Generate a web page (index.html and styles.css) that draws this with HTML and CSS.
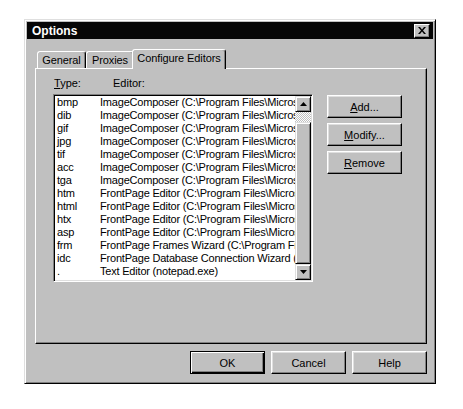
FILE: index.html
```html
<!DOCTYPE html>
<html lang="en">
<head>
    <meta charset="UTF-8">
    <meta name="viewport" content="width=device-width, initial-scale=1.0">
    <title>Options</title>
    <link rel="stylesheet" href="styles.css">
</head>
<body>
    <div class="dialog">
        <div class="titlebar">
            <span class="title">Options</span>
            <div class="close">
                <svg width="8" height="7" viewBox="0 0 8 7">
                    <path d="M0 0h2l2 2.5 2-2.5h2l-3 3.5 3 3.5h-2l-2-2.5-2 2.5h-2l3-3.5z" fill="#000"/>
                </svg>
            </div>
        </div>
        <div class="main">
            <div class="tabs">
                <div class="tab tab-general">General</div>
                <div class="tab tab-proxies">Proxies</div>
                <div class="tab active">Configure Editors</div>
            </div>
            <div class="panel">
                <div class="heads">
                    <span class="head-type"><u>T</u>ype:</span>
                    <span class="head-editor">Editor:</span>
                </div>
                <div class="row">
                    <div class="listbox">
                        <div class="items" id="items"></div>
                        <div class="scrollbar">
                            <div class="sb-btn">
                                <svg width="7" height="4" viewBox="0 0 7 4"><path d="M3.5 0L7 4H0z" fill="#000"/></svg>
                            </div>
                            <div class="sb-track"></div>
                            <div class="sb-thumb"></div>
                            <div class="sb-btn">
                                <svg width="7" height="4" viewBox="0 0 7 4"><path d="M0 0h7L3.5 4z" fill="#000"/></svg>
                            </div>
                        </div>
                    </div>
                    <div class="side">
                        <button class="btn"><u>A</u>dd...</button>
                        <button class="btn"><u>M</u>odify...</button>
                        <button class="btn"><u>R</u>emove</button>
                    </div>
                </div>
            </div>
            <div class="footer">
                <button class="btn default">OK</button>
                <button class="btn">Cancel</button>
                <button class="btn">Help</button>
            </div>
        </div>
    </div>
    <script>
        let editors = [
            ["bmp", "ImageComposer (C:\\Program Files\\Microsoft ImageComposer\\imgcmp.exe)"],
            ["dib", "ImageComposer (C:\\Program Files\\Microsoft ImageComposer\\imgcmp.exe)"],
            ["gif", "ImageComposer (C:\\Program Files\\Microsoft ImageComposer\\imgcmp.exe)"],
            ["jpg", "ImageComposer (C:\\Program Files\\Microsoft ImageComposer\\imgcmp.exe)"],
            ["tif", "ImageComposer (C:\\Program Files\\Microsoft ImageComposer\\imgcmp.exe)"],
            ["acc", "ImageComposer (C:\\Program Files\\Microsoft ImageComposer\\imgcmp.exe)"],
            ["tga", "ImageComposer (C:\\Program Files\\Microsoft ImageComposer\\imgcmp.exe)"],
            ["htm", "FrontPage Editor (C:\\Program Files\\Microsoft FrontPage\\bin\\fpeditor.exe)"],
            ["html", "FrontPage Editor (C:\\Program Files\\Microsoft FrontPage\\bin\\fpeditor.exe)"],
            ["htx", "FrontPage Editor (C:\\Program Files\\Microsoft FrontPage\\bin\\fpeditor.exe)"],
            ["asp", "FrontPage Editor (C:\\Program Files\\Microsoft FrontPage\\bin\\fpeditor.exe)"],
            ["frm", "FrontPage Frames Wizard (C:\\Program Files\\Microsoft FrontPage\\bin\\fpeditor.exe)"],
            ["idc", "FrontPage Database Connection Wizard (C:\\Program Files\\Microsoft FrontPage)"],
            [".", "Text Editor (notepad.exe)"]
        ];
        let str = "";
        for (let i = 0; i < editors.length; i++) {
            str += `
                <div class="item">
                    <span class="col-type">${editors[i][0]}</span>
                    <span class="col-editor">${editors[i][1]}</span>
                </div>
            `;
        }
        document.getElementById("items").innerHTML = str;
    </script>
</body>
</html>
```

FILE: styles.css
```css
body {
    margin: 0;
    background: #fff;
    font-family: 'Liberation Sans', Arial, sans-serif;
    font-size: 11px;
    color: #000;
}
.dialog {
    box-sizing: border-box;
    width: 412px;
    height: 365px;
    margin: 19px 0 0 24px;
    padding: 2px;
    background: #c0c0c0;
    border: 1px solid;
    border-color: #dfdfdf #000 #000 #dfdfdf;
    box-shadow: inset 1px 1px #fff, inset -1px -1px #808080;
}
.titlebar {
    height: 17px;
    background: #060606;
    display: flex;
    align-items: center;
    justify-content: space-between;
    padding: 0 3px 0 5px;
}
.title {
    color: #fff;
    font-weight: bold;
    font-size: 12px;
}
.close {
    box-sizing: border-box;
    width: 16px;
    height: 14px;
    background: #c0c0c0;
    border: 1px solid;
    border-color: #fff #000 #000 #fff;
    box-shadow: inset -1px -1px #808080;
    display: flex;
    align-items: center;
    justify-content: center;
}
.close svg {
    display: block;
}
.main {
    padding: 10px 6px 0 8px;
}
.tabs {
    display: flex;
    align-items: flex-end;
    height: 20px;
    margin-bottom: -1px;
    padding-left: 2px;
}
.tab {
    box-sizing: border-box;
    height: 17px;
    background: #c0c0c0;
    border: 1px solid;
    border-bottom: none;
    border-color: #fff #000 transparent #fff;
    border-radius: 3px 3px 0 0;
    box-shadow: inset -1px 0 #808080;
    text-align: center;
    line-height: 16px;
    margin-bottom: 1px;
    letter-spacing: -0.1px;
}
.tab-general {
    width: 49px;
}
.tab-proxies {
    width: 48px;
}
.tab.active {
    position: relative;
    z-index: 1;
    width: 94px;
    height: 20px;
    margin: 0 0 0 -2px;
    line-height: 17px;
}
.panel {
    box-sizing: border-box;
    width: 392px;
    height: 276px;
    border: 1px solid;
    border-color: #fff #000 #000 #fff;
    box-shadow: inset -1px -1px #808080;
    padding: 8px 0 0 17px;
}
.heads {
    height: 17px;
    line-height: 13px;
    display: flex;
    padding-left: 1px;
}
.head-type {
    width: 59px;
}
.row {
    display: flex;
    gap: 14px;
}
.listbox {
    box-sizing: border-box;
    width: 260px;
    height: 188px;
    background: #fff;
    border: 1px solid;
    border-color: #808080 #fff #fff #808080;
    box-shadow: inset 1px 1px #000, inset -1px -1px #dfdfdf;
    padding: 1px;
    display: flex;
}
.items {
    flex: 1;
    overflow: hidden;
}
.item {
    display: flex;
    height: 13px;
    line-height: 13px;
    white-space: nowrap;
    padding-left: 2px;
    letter-spacing: -0.2px;
}
.col-type {
    width: 43px;
    flex-shrink: 0;
}
.scrollbar {
    width: 16px;
    display: flex;
    flex-direction: column;
}
.sb-btn, .sb-thumb {
    box-sizing: border-box;
    background: #c0c0c0;
    border: 1px solid;
    border-color: #dfdfdf #000 #000 #dfdfdf;
    box-shadow: inset 1px 1px #fff, inset -1px -1px #808080;
}
.sb-btn {
    height: 16px;
    display: flex;
    align-items: center;
    justify-content: center;
}
.sb-btn svg {
    display: block;
}
.sb-track {
    height: 10px;
    background: repeating-conic-gradient(#c0c0c0 0 25%, #fff 0 50%) 0 0 / 2px 2px;
}
.sb-thumb {
    flex: 1;
}
.side {
    display: flex;
    flex-direction: column;
    gap: 5px;
    padding-top: 1px;
}
.btn {
    box-sizing: border-box;
    width: 75px;
    height: 23px;
    padding: 0;
    background: #c0c0c0;
    border: 1px solid;
    border-color: #fff #000 #000 #fff;
    box-shadow: inset -1px -1px #808080, inset 1px 1px #dfdfdf;
    font-family: inherit;
    font-size: 11px;
    color: #000;
}
.btn.default {
    border: 1px solid #000;
    box-shadow: inset 1px 1px #fff, inset -1px -1px #000, inset -2px -2px #808080;
}
.footer {
    display: flex;
    justify-content: flex-end;
    gap: 6px;
    width: 392px;
    margin-top: 7px;
}
```
